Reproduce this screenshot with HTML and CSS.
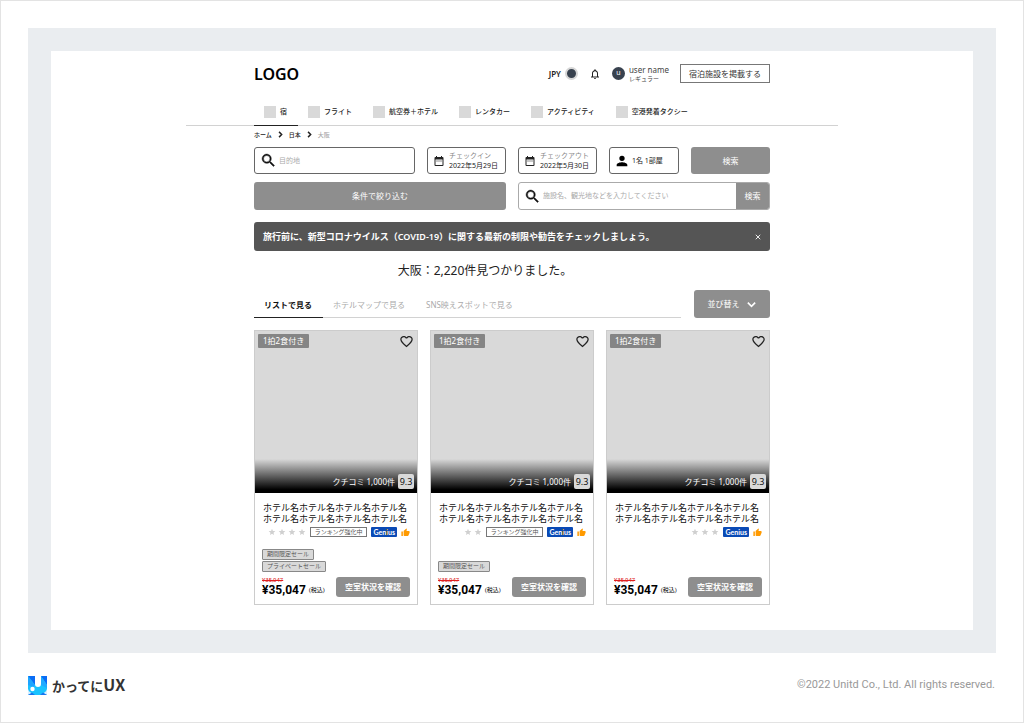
FILE: index.html
```
<!DOCTYPE html>
<html lang="ja">
<head>
<meta charset="utf-8">
<meta name="viewport" content="width=device-width, initial-scale=1">
<title>かってにUX</title>
<link rel="stylesheet" href="styles.css">
</head>
<body>
<svg class="defs" aria-hidden="true">
  <symbol id="search" viewBox="0 0 24 24"><path d="M15.500 14h-.8l-.3-.3A6.500 6.500 0 1 0 13.700 14.400l.3.300v.8l5 5L20.500 19zM9.500 14a4.500 4.500 0 1 1 0-9 4.500 4.500 0 0 1 0 9z" stroke="currentColor" stroke-width=".6"/></symbol>
  <symbol id="calendar" viewBox="0 0 24 24"><path d="M9 11H7v2h2zm4 0h-2v2h2zm4 0h-2v2h2zm2-7h-1V2h-2v2H8V2H6v2H5a2 2 0 0 0-2 2v14a2 2 0 0 0 2 2h14a2 2 0 0 0 2-2V6a2 2 0 0 0-2-2zm0 16H5V9h14z"/></symbol>
  <symbol id="person" viewBox="0 0 24 24"><path d="M12 12a4 4 0 1 0 0-8 4 4 0 0 0 0 8zm0 2c-2.700 0-8 1.300-8 4v2h16v-2c0-2.700-5.300-4-8-4z"/></symbol>
  <symbol id="heart" viewBox="0 0 24 24"><path d="M16.500 3c-1.740 0-3.410.81-4.500 2.090C10.910 3.810 9.240 3 7.500 3 4.420 3 2 5.420 2 8.500c0 3.780 3.400 6.860 8.550 11.540L12 21.350l1.450-1.320C18.600 15.360 22 12.280 22 8.500 22 5.420 19.580 3 16.500 3zm-4.400 15.550l-.1.100-.1-.1C7.140 14.240 4 11.390 4 8.500 4 6.500 5.500 5 7.500 5c1.540 0 3.040.99 3.570 2.360h1.870C13.460 5.990 14.960 5 16.500 5c2 0 3.500 1.500 3.500 3.500 0 2.890-3.140 5.740-7.900 10.050z"/></symbol>
  <symbol id="star" viewBox="0 0 24 24"><path d="M12 17.270 18.180 21l-1.640-7.030L22 9.240l-7.190-.61L12 2 9.190 8.630 2 9.240l5.460 4.730L5.820 21z"/></symbol>
  <symbol id="thumb" viewBox="0 0 24 24"><path d="M1 21h4V9H1zm22-11a2 2 0 0 0-2-2h-6.300l.95-4.570.03-.32c0-.41-.17-.79-.44-1.060L14.170 1 7.590 7.590C7.220 7.950 7 8.450 7 9v10a2 2 0 0 0 2 2h9c.83 0 1.540-.5 1.840-1.220l3.020-7.050c.09-.23.14-.47.14-.73z"/></symbol>
  <symbol id="bell" viewBox="0 0 24 24"><path d="M12 22a2 2 0 0 0 2-2h-4a2 2 0 0 0 2 2zm6-6v-5c0-3.070-1.630-5.640-4.500-6.320V4a1.500 1.500 0 0 0-3 0v.68C7.640 5.360 6 7.920 6 11v5l-2 2v1h16v-1zm-2 1H8v-6c0-2.480 1.510-4.500 4-4.500s4 2.020 4 4.500z"/></symbol>
  <symbol id="chevron-right" viewBox="0 0 24 24"><path d="M7 3 L16 12 L7 21" fill="none" stroke="currentColor" stroke-width="5"/></symbol>
  <symbol id="chevron-down" viewBox="0 0 24 24"><path d="M4 8 L12 16 L20 8" fill="none" stroke="currentColor" stroke-width="3.500"/></symbol>
  <symbol id="close" viewBox="0 0 24 24"><path d="M3 3 L21 21 M21 3 L3 21" fill="none" stroke="currentColor" stroke-width="3.500"/></symbol>
</svg>
<div class="frame">
  <div class="screen">
    <header class="header">
      <div class="content topbar">
        <a class="logo" href="#">LOGO</a>
        <div class="account">
          <button class="currency" type="button">JPY <span class="currency-dot"></span></button>
          <button class="plain bell" type="button" aria-label="通知"><svg class="icon-bell"><use href="#bell"/></svg></button>
          <a class="user" href="#"><span class="avatar">u</span><span class="user-text"><span class="user-name">user name</span><span class="user-rank">レギュラー</span></span></a>
          <button class="list-property" type="button">宿泊施設を掲載する</button>
        </div>
      </div>
      <nav class="nav">
        <div class="content nav-list">
          <a class="nav-item nav-current" href="#"><span class="nav-icon"></span>宿</a>
          <a class="nav-item" href="#"><span class="nav-icon"></span>フライト</a>
          <a class="nav-item" href="#"><span class="nav-icon"></span>航空券＋ホテル</a>
          <a class="nav-item" href="#"><span class="nav-icon"></span>レンタカー</a>
          <a class="nav-item" href="#"><span class="nav-icon"></span>アクティビティ</a>
          <a class="nav-item" href="#"><span class="nav-icon"></span>空港発着タクシー</a>
        </div>
      </nav>
    </header>
    <main class="content">
      <div class="breadcrumb">
        <a href="#">ホーム</a><svg class="icon-crumb"><use href="#chevron-right"/></svg><a href="#">日本</a><svg class="icon-crumb"><use href="#chevron-right"/></svg><span class="crumb-current">大阪</span>
      </div>
      <form class="search">
        <div class="search-half">
          <label class="field field-grow"><svg class="icon-search"><use href="#search"/></svg><input class="text-input" type="text" placeholder="目的地" aria-label="目的地"></label>
          <button class="field date" type="button"><svg class="icon-calendar"><use href="#calendar"/></svg><span class="date-text"><span class="date-label">チェックイン</span><span>2022年5月29日</span></span></button>
        </div>
        <div class="search-half">
          <button class="field date" type="button"><svg class="icon-calendar"><use href="#calendar"/></svg><span class="date-text"><span class="date-label">チェックアウト</span><span>2022年5月30日</span></span></button>
          <button class="field guests" type="button"><svg class="icon-person"><use href="#person"/></svg>1名 1部屋</button>
          <button class="button search-submit" type="submit">検索</button>
        </div>
        <button class="button" type="button">条件で絞り込む</button>
        <div class="keyword">
          <label class="keyword-label"><svg class="icon-search"><use href="#search"/></svg><input class="text-input" type="text" placeholder="施設名、観光地などを入力してください" aria-label="施設名、観光地など"></label>
          <button class="keyword-submit" type="button">検索</button>
        </div>
      </form>
      <div class="notice"><p class="notice-text">旅行前に、新型コロナウイルス（COVID-19）に関する最新の制限や勧告をチェックしましょう。</p><button class="plain" type="button" aria-label="閉じる"><svg class="icon-close"><use href="#close"/></svg></button></div>
      <h1 class="headline">大阪：2,220件見つかりました。</h1>
      <div class="view-bar">
        <div class="tabs">
          <button class="tab tab-current" type="button">リストで見る</button>
          <button class="tab" type="button">ホテルマップで見る</button>
          <button class="tab" type="button">SNS映えスポットで見る</button>
        </div>
        <button class="button sort" type="button">並び替え<svg class="icon-down"><use href="#chevron-down"/></svg></button>
      </div>
      <div class="cards">
        <article class="card">
          <div class="photo">
            <div class="photo-top"><span class="plan">1拍2食付き</span><button class="plain" type="button" aria-label="お気に入り"><svg class="icon-heart"><use href="#heart"/></svg></button></div>
            <div class="photo-bottom">クチコミ 1,000件<span class="score">9.3</span></div>
          </div>
          <div class="card-body">
            <h2 class="hotel">ホテル名ホテル名ホテル名ホテル名ホテル名ホテル名ホテル名ホテル名</h2>
            <div class="badges">
              <span class="stars"><svg class="icon-star"><use href="#star"/></svg><svg class="icon-star"><use href="#star"/></svg><svg class="icon-star"><use href="#star"/></svg><svg class="icon-star"><use href="#star"/></svg></span>
              <span class="ranking">ランキング強化中</span><span class="genius">Gen<span class="genius-i">i</span>us</span><svg class="icon-thumb"><use href="#thumb"/></svg>
            </div>
            <div class="sales"><span class="sale">期間限定セール</span><span class="sale">プライベートセール</span></div>
            <div class="purchase"><div><s class="old-price">¥35,047</s><div class="price">¥35,047<span class="tax">(税込)</span></div></div><button class="check" type="button">空室状況を確認</button></div>
          </div>
        </article>
        <article class="card">
          <div class="photo">
            <div class="photo-top"><span class="plan">1拍2食付き</span><button class="plain" type="button" aria-label="お気に入り"><svg class="icon-heart"><use href="#heart"/></svg></button></div>
            <div class="photo-bottom">クチコミ 1,000件<span class="score">9.3</span></div>
          </div>
          <div class="card-body">
            <h2 class="hotel">ホテル名ホテル名ホテル名ホテル名ホテル名ホテル名ホテル名ホテル名</h2>
            <div class="badges">
              <span class="stars"><svg class="icon-star"><use href="#star"/></svg><svg class="icon-star"><use href="#star"/></svg></span>
              <span class="ranking">ランキング強化中</span><span class="genius">Gen<span class="genius-i">i</span>us</span><svg class="icon-thumb"><use href="#thumb"/></svg>
            </div>
            <div class="sales"><span class="sale">期間限定セール</span></div>
            <div class="purchase"><div><s class="old-price">¥35,047</s><div class="price">¥35,047<span class="tax">(税込)</span></div></div><button class="check" type="button">空室状況を確認</button></div>
          </div>
        </article>
        <article class="card">
          <div class="photo">
            <div class="photo-top"><span class="plan">1拍2食付き</span><button class="plain" type="button" aria-label="お気に入り"><svg class="icon-heart"><use href="#heart"/></svg></button></div>
            <div class="photo-bottom">クチコミ 1,000件<span class="score">9.3</span></div>
          </div>
          <div class="card-body">
            <h2 class="hotel">ホテル名ホテル名ホテル名ホテル名ホテル名ホテル名ホテル名ホテル名</h2>
            <div class="badges">
              <span class="stars"><svg class="icon-star"><use href="#star"/></svg><svg class="icon-star"><use href="#star"/></svg><svg class="icon-star"><use href="#star"/></svg></span>
              <span class="genius">Genius</span><svg class="icon-thumb"><use href="#thumb"/></svg>
            </div>
            <div class="sales"></div>
            <div class="purchase"><div><s class="old-price">¥35,047</s><div class="price">¥35,047<span class="tax">(税込)</span></div></div><button class="check" type="button">空室状況を確認</button></div>
          </div>
        </article>
      </div>
    </main>
  </div>
</div>
<footer class="footer">
  <a class="brand" href="#">
    <svg class="brand-mark" viewBox="0 0 19 19" aria-hidden="true">
      <path d="M0 0H7V8A3 3 0 0 0 13 8V0H19V19H0z" fill="#19c3ff"/>
      <path d="M0 0H7V9z" fill="#0a6cf5"/>
      <path d="M0 0L7 9L5 11L0 9z" fill="#1ea4ff"/>
      <path d="M13 0H19V9z" fill="#0a6cf5"/>
      <path d="M13 0L19 9V12L13 9z" fill="#21aaff"/>
      <path d="M0 13C1 16 3 17 5 17.500L0 19z" fill="#d9efff"/>
      <path d="M19 13C18 16 16 17 14 17.500L19 19z" fill="#d9efff"/>
      <path d="M0 19L4 16.500L7 19z" fill="#1675ef"/>
      <path d="M19 19L15 16.500L12 19z" fill="#1675ef"/>
      <circle cx="4.500" cy="13" r="2.200" fill="#fff"/>
    </svg>
    <span>かってに<span class="brand-ux">UX</span></span>
  </a>
  <small class="copyright">©2022 Unitd Co., Ltd. All rights reserved.</small>
</footer>
</body>
</html>
```
FILE: styles.css
```
* {
  box-sizing: border-box;
}

body {
  min-height: 100vh;
  margin: 0;
  padding: 27px;
  border: 1px solid #e3e3e3;
  background: #fff;
  color: #222;
  font-family: "Noto Sans", "Noto Sans CJK JP", sans-serif;
  font-size: 8px;
  line-height: 12px;
}

a {
  color: inherit;
  text-decoration: none;
}

button,
input {
  margin: 0;
  padding: 0;
  font: inherit;
  color: inherit;
}

svg {
  display: block;
  flex: none;
  fill: currentColor;
}

h1,
h2,
p {
  margin: 0;
}

.defs {
  display: none;
}

.frame {
  padding: 23px;
  background: #eaedf0;
}

.screen {
  padding: 13px 12px 25px;
  background: #fff;
}

.content {
  width: 100%;
  max-width: 516px;
  margin: 0 auto;
}

.plain {
  display: flex;
  border: 0;
  background: none;
}

/* header */

.header {
  max-width: 652px;
  margin: 0 auto;
}

.topbar {
  display: flex;
  align-items: center;
  justify-content: space-between;
}

.logo {
  color: #000;
  font-size: 16px;
  font-weight: 600;
  line-height: 18px;
}

.account {
  display: flex;
  align-items: center;
  gap: 11px;
}

.currency {
  display: flex;
  align-items: center;
  gap: 4px;
  border: 0;
  background: none;
  font-size: 8px;
  font-weight: 600;
}

.currency-dot {
  width: 13px;
  height: 13px;
  border: 2px solid #d6d6d6;
  border-radius: 50%;
  background: #38424f;
}

.icon-bell {
  width: 12px;
  height: 12px;
}

.user {
  display: flex;
  align-items: center;
  gap: 4px;
  color: #444;
}

.avatar {
  width: 13px;
  height: 13px;
  border-radius: 50%;
  background: #38424f;
  color: #fff;
  font-size: 7px;
  line-height: 12px;
  text-align: center;
}

.user-text {
  display: flex;
  flex-direction: column;
}

.user-name {
  font-size: 8px;
  line-height: 10px;
}

.user-rank {
  font-size: 6px;
  line-height: 8px;
}

.list-property {
  height: 19px;
  padding: 0 8px;
  border: 1px solid #777;
  background: #fff;
  color: #333;
}

.nav {
  margin-top: 21px;
  border-bottom: 1px solid #d2d2d2;
}

.nav-list {
  display: flex;
  gap: 10px;
}

.nav-item {
  display: flex;
  align-items: center;
  gap: 4px;
  height: 21px;
  padding: 0 1px 6px 10px;
  font-size: 7px;
  font-weight: 500;
}

.nav-current {
  height: 22px;
  margin: 0 -10px -1px 0;
  padding-right: 11px;
  border-bottom: 1px solid #222;
}

.nav-icon {
  width: 12px;
  height: 12px;
  background: #d9d9d9;
}

/* breadcrumb */

.breadcrumb {
  display: flex;
  align-items: center;
  gap: 5px;
  height: 21px;
  padding-bottom: 4px;
  font-size: 6px;
  font-weight: 500;
}

.icon-crumb {
  width: 7px;
  height: 7px;
}

.crumb-current {
  color: #aaa;
}

/* search */

.search {
  display: grid;
  grid-template-columns: 1fr 1fr;
  gap: 8px 12px;
}

.search-half {
  display: flex;
  gap: 12px;
}

.field {
  display: flex;
  align-items: center;
  height: 27px;
  border: 1px solid #666;
  border-radius: 3px;
  background: #fff;
  white-space: nowrap;
}

.field-grow {
  flex: 1;
  min-width: 0;
  gap: 2px;
  padding: 0 5px;
}

.icon-search {
  width: 17px;
  height: 17px;
  color: #111;
}

.text-input {
  flex: 1;
  min-width: 0;
  border: 0;
  outline: 0;
  background: none;
  font-size: 7px;
}

.text-input::placeholder {
  color: #aaa;
  opacity: 1;
}

.date {
  width: 79px;
  gap: 4px;
  padding: 0 5px;
  text-align: left;
}

.icon-calendar {
  width: 12px;
  height: 12px;
}

.date-text {
  display: flex;
  flex-direction: column;
  font-size: 7px;
  line-height: 10px;
}

.date-label {
  color: #888;
}

.guests {
  width: 70px;
  gap: 2px;
  padding: 0 4px;
  font-size: 7px;
}

.icon-person {
  width: 16px;
  height: 16px;
  color: #000;
}

.button {
  height: 28px;
  border: 0;
  border-radius: 3px;
  background: #8e8e8e;
  color: #fff;
}

.search-submit {
  flex: 1;
  height: 27px;
}

.keyword {
  display: flex;
  height: 28px;
  overflow: hidden;
  border: 1px solid #aaa;
  border-radius: 3px;
}

.keyword-label {
  display: flex;
  flex: 1;
  align-items: center;
  gap: 2px;
  min-width: 0;
  padding: 0 5px;
}

.keyword-submit {
  width: 33px;
  border: 0;
  background: #8e8e8e;
  color: #fff;
}

/* notice and headline */

.notice {
  display: flex;
  align-items: center;
  justify-content: space-between;
  min-height: 29px;
  margin-top: 12px;
  padding: 0 9px;
  border-radius: 3px;
  background: #555;
  color: #fff;
}

.notice-text {
  font-size: 9px;
  font-weight: 600;
}

.icon-close {
  width: 6px;
  height: 6px;
}

.headline {
  padding: 11px 54px 10px 0;
  font-size: 12px;
  font-weight: 400;
  line-height: 18px;
  text-align: center;
}

/* tabs */

.view-bar {
  display: flex;
  align-items: flex-end;
  gap: 13px;
}

.tabs {
  display: flex;
  flex: 1;
  border-bottom: 1px solid #d2d2d2;
}

.tab {
  height: 24px;
  margin-bottom: -1px;
  padding: 0 11px 2px 10px;
  border: 0;
  border-bottom: 1px solid transparent;
  background: none;
  color: #aaa;
}

.tab-current {
  border-bottom-color: #222;
  color: #111;
  font-weight: 700;
}

.sort {
  display: flex;
  align-items: center;
  justify-content: center;
  gap: 6px;
  width: 76px;
}

.icon-down {
  width: 11px;
  height: 11px;
}

/* hotel cards */

.cards {
  display: grid;
  grid-template-columns: repeat(3, 1fr);
  gap: 12px;
  margin-top: 12px;
}

.card {
  border: 1px solid #ccc;
}

.photo {
  display: flex;
  flex-direction: column;
  justify-content: space-between;
  aspect-ratio: 1;
  background: #d9d9d9;
}

.photo-top {
  display: flex;
  align-items: flex-start;
  justify-content: space-between;
  padding: 3px;
}

.plan {
  padding: 1px 5px;
  border-radius: 1px;
  background: #858585;
  color: #fff;
}

.icon-heart {
  width: 15px;
  height: 15px;
  color: #222;
}

.photo-bottom {
  display: flex;
  align-items: flex-end;
  justify-content: flex-end;
  gap: 3px;
  height: 34px;
  padding: 0 3px 4px;
  background: linear-gradient(#d9d9d9, #000 90%);
  color: #fff;
  line-height: 15px;
}

.score {
  width: 16px;
  border-radius: 2px;
  background: #d9d9d9;
  color: #111;
  font-size: 9px;
  text-align: center;
}

.card-body {
  padding: 9px 7px 7px;
}

.hotel {
  overflow: hidden;
  padding-left: 1px;
  color: #111;
  font-size: 9px;
  font-weight: 400;
  line-height: 11px;
}

.badges {
  display: flex;
  align-items: center;
  justify-content: flex-end;
  gap: 4px;
  margin-top: 3px;
}

.stars {
  display: flex;
  gap: 2px;
  color: #d0d0d0;
}

.icon-star {
  width: 8px;
  height: 8px;
}

.ranking {
  padding: 0 4px;
  border: 1px solid #777;
  color: #555;
  font-size: 6px;
  line-height: 8px;
}

.genius {
  padding: 0 2px;
  border-radius: 1px;
  background: #0a4ab5;
  color: #fff;
  font-family: Lato, sans-serif;
  font-size: 7px;
  font-weight: 700;
  line-height: 10px;
}

.genius-i {
  color: #febb02;
}

.icon-thumb {
  width: 9px;
  height: 9px;
  color: #ff9a00;
}

.sales {
  display: flex;
  flex-direction: column;
  align-items: flex-start;
  justify-content: flex-end;
  gap: 1px;
  min-height: 35px;
}

.sale {
  padding: 0 4px;
  border: 1px solid #888;
  border-radius: 1px;
  background: #d9d9d9;
  color: #555;
  font-size: 6px;
  line-height: 9px;
}

.purchase {
  display: flex;
  align-items: flex-end;
  justify-content: space-between;
  margin-top: 5px;
}

.old-price {
  display: block;
  color: #e02020;
  font-family: Roboto, sans-serif;
  font-size: 6px;
  line-height: 6px;
}

.price {
  display: flex;
  align-items: center;
  gap: 3px;
  color: #000;
  font-family: Roboto, sans-serif;
  font-size: 12px;
  font-weight: 700;
  line-height: 14px;
}

.tax {
  font-family: Roboto, "Noto Sans CJK JP", sans-serif;
  font-size: 6px;
  font-weight: 400;
}

.check {
  height: 20px;
  padding: 0 9px;
  border: 0;
  border-radius: 3px;
  background: #8e8e8e;
  color: #fff;
  font-weight: 600;
}

/* footer */

.footer {
  display: flex;
  align-items: center;
  justify-content: space-between;
  padding: 22px 1px 0 0;
}

.brand {
  display: flex;
  align-items: center;
  gap: 5px;
  color: #333;
  font-family: "Noto Sans CJK JP", sans-serif;
  font-size: 13px;
  font-weight: 700;
  line-height: 18px;
}

.brand-mark {
  width: 19px;
  height: 19px;
}

.brand-ux {
  font-size: 16px;
}

.copyright {
  color: #999;
  font-family: Roboto, sans-serif;
  font-size: 11px;
}
```
